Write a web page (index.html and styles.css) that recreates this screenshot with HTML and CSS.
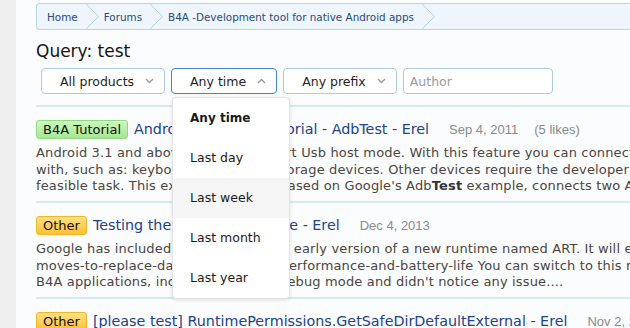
FILE: index.html
```html
<!DOCTYPE html>
<html lang="en">
  <head>
    <meta charset="UTF-8" />
    <meta name="viewport" content="width=device-width, initial-scale=1.0" />
    <title>Search results - test</title>
    <link rel="stylesheet" href="styles.css">
  </head>
  <body>
    <div class="page">
      <aside class="side"></aside>

      <main class="main">
        <nav class="crumbs">
          <a class="crumb" href="#">Home</a>
          <svg class="crumb__sep" viewBox="0 0 13 25" width="13" height="25"><polyline points="0,0 12.5,12.5 0,25" /></svg>
          <a class="crumb" href="#">Forums</a>
          <svg class="crumb__sep" viewBox="0 0 13 25" width="13" height="25"><polyline points="0,0 12.5,12.5 0,25" /></svg>
          <a class="crumb" href="#">B4A -Development tool for native Android apps</a>
          <svg class="crumb__sep" viewBox="0 0 13 25" width="13" height="25"><polyline points="0,0 12.5,12.5 0,25" /></svg>
        </nav>

        <h1 class="query">Query: test</h1>

        <form class="filters" onsubmit="return false;">
          <button class="filter" type="button">
            All products
            <svg class="filter__arrow" viewBox="0 0 9 6" width="9" height="6"><polyline points="1,1 4.5,4.5 8,1" /></svg>
          </button>

          <div class="filter__wrap">
            <button class="filter filter--open" type="button">
              Any time
              <svg class="filter__arrow" viewBox="0 0 9 6" width="9" height="6"><polyline points="1,5 4.5,1.5 8,5" /></svg>
            </button>
            <ul class="menu">
              <li class="menu__item menu__item--active">Any time</li>
              <li class="menu__item">Last day</li>
              <li class="menu__item menu__item--hover">Last week</li>
              <li class="menu__item">Last month</li>
              <li class="menu__item">Last year</li>
            </ul>
          </div>

          <button class="filter" type="button">
            Any prefix
            <svg class="filter__arrow" viewBox="0 0 9 6" width="9" height="6"><polyline points="1,1 4.5,4.5 8,1" /></svg>
          </button>

          <input class="author" type="text" placeholder="Author" />
        </form>

        <section class="results">
          <article class="result">
            <div class="result__head">
              <span class="tag tag--tutorial">B4A Tutorial</span>
              <a class="result__title" href="#">Android USB Host Tutorial - AdbTest - Erel</a>
              <span class="result__meta">Sep 4, 2011</span>
              <span class="result__meta">(5 likes)</span>
            </div>
            <p class="result__text">
              <span>Android 3.1 and above devices support Usb host mode. With this feature you can connect external devices</span>
              <span>with, such as: keyboards, mice and storage devices. Other devices require the developer to write</span>
              <span>feasible task. This example which is based on Google's Adb<b>Test</b> example, connects two Android devices</span>
            </p>
          </article>

          <article class="result">
            <div class="result__head">
              <span class="tag tag--other">Other</span>
              <a class="result__title" href="#">Testing the new ART runtime - Erel</a>
              <span class="result__meta">Dec 4, 2013</span>
            </div>
            <p class="result__text">
              <span>Google has included in Android 4.4 an early version of a new runtime named ART. It will eventually</span>
              <span>moves-to-replace-dalvik-with-art-for-performance-and-battery-life You can switch to this new runtime</span>
              <span>B4A applications, including with the debug mode and didn't notice any issue....</span>
            </p>
          </article>

          <article class="result">
            <div class="result__head">
              <span class="tag tag--other">Other</span>
              <a class="result__title" href="#">[please test] RuntimePermissions.GetSafeDirDefaultExternal - Erel</a>
              <span class="result__meta">Nov 2, 2015</span>
            </div>
          </article>
        </section>
      </main>
    </div>
  </body>
</html>
```

FILE: styles.css
```css
body {
  font-family: "DejaVu Sans", Verdana, sans-serif;
  margin: 0;
  padding: 0;
  background: #fbfcfe;
  color: #222;
  overflow: hidden;
}
.page {
  display: flex;
  width: 760px;
  min-height: 328px;
}
.side {
  width: 16px;
  flex-shrink: 0;
  background: #efefef;
}
.main {
  flex: 1;
  padding: 3px 0 0 20px;
}

/* breadcrumb */
.crumbs {
  display: flex;
  align-items: center;
  height: 25px;
  background: #eef5fc;
  border: 1px solid #b9d3ea;
  border-radius: 4px 0 0 4px;
  border-right: none;
  overflow: hidden;
}
.crumb {
  font-size: 10.4px;
  color: #2c4a78;
  text-decoration: none;
  padding: 0 8px 0 5px;
}
.crumb:first-child {
  padding-left: 10px;
}
.crumb__sep {
  display: block;
  flex-shrink: 0;
}
.crumb__sep polyline {
  fill: none;
  stroke: #bcd5ea;
  stroke-width: 1;
}

.query {
  font-size: 17px;
  font-weight: normal;
  color: #141414;
  line-height: 22px;
  margin: 10px 0 6px;
}

/* filter row */
.filters {
  display: flex;
  gap: 6px;
  padding-left: 5px;
}
.filter {
  display: flex;
  align-items: center;
  gap: 11px;
  height: 26px;
  padding: 0 10px 0 18px;
  background: #fff;
  border: 1px solid #aecbe4;
  border-radius: 4px;
  font-family: inherit;
  font-size: 12.5px;
  color: #1e1e1e;
  cursor: pointer;
}
.filter--open {
  border-color: #3f86cf;
}
.filter__arrow polyline {
  fill: none;
  stroke: #9a9a9a;
  stroke-width: 1.4;
}
.filter__wrap {
  position: relative;
}
.author {
  width: 150px;
  height: 26px;
  box-sizing: border-box;
  padding: 0 6px;
  border: 1px solid #aecbe4;
  border-radius: 4px;
  background: #fff;
  font-family: inherit;
  font-size: 12.5px;
}
.author::placeholder {
  color: #9a9a9a;
}

/* dropdown */
.menu {
  position: absolute;
  top: 29px;
  left: 1px;
  z-index: 10;
  width: 118px;
  margin: 0;
  padding: 0;
  list-style: none;
  background: #fff;
  border: 1px solid #e4e4e4;
  border-radius: 4px;
  box-shadow: 0 1px 4px rgba(0, 0, 0, 0.12);
  box-sizing: border-box;
}
.menu__item {
  height: 40px;
  line-height: 40px;
  padding-left: 17px;
  font-size: 12.5px;
  color: #1a1a1a;
}
.menu__item--active {
  font-weight: bold;
  font-size: 12px;
}
.menu__item--hover {
  background: #f5f5f5;
}

/* results */
.results {
  margin-top: 11px;
}
.result {
  border-top: 2px solid #d6e7f6;
  padding: 12px 0 6.5px;
}
.result__head {
  display: flex;
  align-items: center;
  height: 20px;
  white-space: nowrap;
}
.tag {
  font-size: 13px;
  line-height: 17px;
  padding: 0 6px;
  border-radius: 3px;
  color: #111;
  margin-right: 6px;
}
.tag--tutorial {
  background: linear-gradient(#cdf7c0, #a6e793);
  border: 1px solid #93d882;
}
.tag--other {
  background: linear-gradient(#ffe08a, #ffc02e);
  border: 1px solid #f2b628;
}
.result__title {
  font-size: 14.3px;
  color: #21428a;
  text-decoration: none;
  margin-right: 20px;
}
.result__meta {
  font-family: "Liberation Sans", Arial, sans-serif;
  font-size: 13px;
  color: #8a8a8a;
  margin-right: 16px;
}
.result__text {
  margin: 6px 0 0;
  font-size: 13px;
  line-height: 16.5px;
  letter-spacing: 0.15px;
  color: #4b4540;
}
.result__text span {
  display: block;
  white-space: nowrap;
}
.result__text b {
  color: #333;
}
```
